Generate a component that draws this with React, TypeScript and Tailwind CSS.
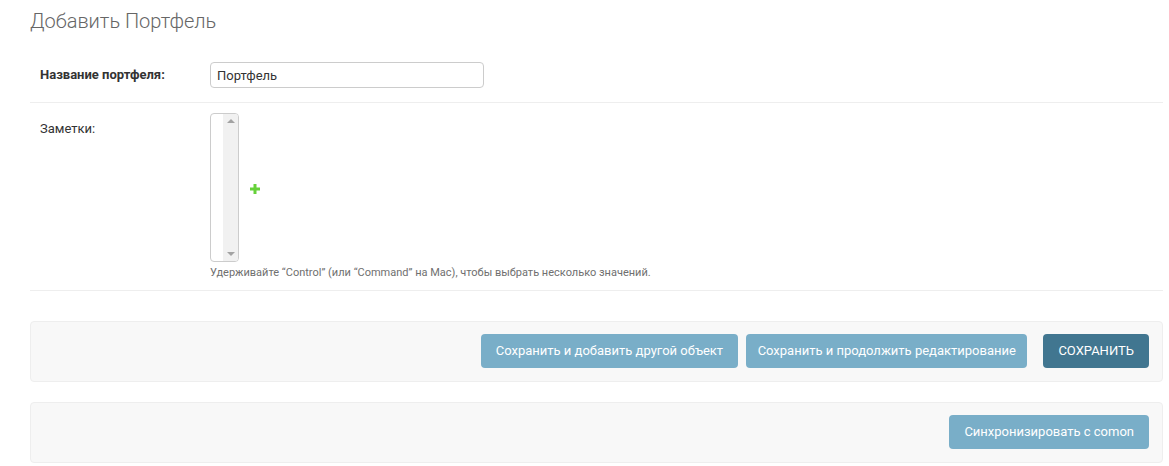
const font = { fontFamily: "Roboto, 'Liberation Sans', sans-serif" };

function AddIcon() {
  return (
    <svg width="10" height="10" viewBox="0 0 10 10" className="block">
      <path d="M3.5 0h3v3.5H10v3H6.5V10h-3V6.5H0v-3h3.5z" fill="#66d13a" />
    </svg>
  );
}

function EmptySelect() {
  return (
    <div className="flex h-[149px] w-[29px] overflow-hidden rounded-[4px] border border-[#cccccc] bg-white">
      <div className="flex-1" />
      <div className="flex w-[15px] flex-col items-center justify-between bg-[#f1f1f1] py-[5px]">
        <div className="h-0 w-0 border-x-[4px] border-b-[4px] border-x-transparent border-b-[#a3a3a3]" />
        <div className="h-0 w-0 border-x-[4px] border-t-[4px] border-x-transparent border-t-[#a3a3a3]" />
      </div>
    </div>
  );
}

function SubmitRow({ children }: { children: React.ReactNode }) {
  return (
    <div className="flex justify-end rounded-[4px] border border-[#eeeeee] bg-[#f8f8f8] pt-[12px] pr-[13px] pb-[13px]">
      {children}
    </div>
  );
}

export default function App() {
  return (
    <main className="min-h-screen bg-white pl-[30px] pr-[6px] text-[13px] text-[#333333]" style={font}>
      <h1 className="pt-[9px] text-[20px] font-light leading-[24px] text-[#666666]">Добавить Портфель</h1>

      <div className="mt-[19px]">
        <div className="flex items-center border-b border-[#eeeeee] pt-[10px] pb-[14px] pl-[10px]">
          <label className="w-[170px] font-bold text-[#333333]">Название портфеля:</label>
          <input
            defaultValue="Портфель"
            className="h-[26px] w-[274px] rounded-[4px] border border-[#cccccc] px-[6px] text-[13px] text-[#333333] outline-none"
          />
        </div>

        <div className="flex border-b border-[#eeeeee] pt-[10px] pb-[11px] pl-[10px]">
          <label className="w-[170px] pt-[8px] leading-[16px] text-[#333333]">Заметки:</label>
          <div>
            <div className="flex items-center">
              <EmptySelect />
              <div className="ml-[11px] mt-[2px]">
                <AddIcon />
              </div>
            </div>
            <p className="mt-[4px] text-[11px] leading-[13px] text-[#6f6f6f]">
              Удерживайте “Control” (или “Command” на Mac), чтобы выбрать несколько значений.
            </p>
          </div>
        </div>
      </div>

      <div className="mt-[30px]">
        <SubmitRow>
          <button className="h-[34px] rounded-[4px] bg-[#79aec8] px-[15px] text-[13px] text-white">
            Сохранить и добавить другой объект
          </button>
          <button className="ml-[8px] h-[34px] rounded-[4px] bg-[#79aec8] px-[11.5px] text-[13px] text-white">
            Сохранить и продолжить редактирование
          </button>
          <button className="ml-[16px] h-[34px] rounded-[4px] bg-[#417690] px-[15px] text-[13px] uppercase text-white">
            Сохранить
          </button>
        </SubmitRow>
      </div>

      <div className="mt-[20px]">
        <SubmitRow>
          <button className="h-[34px] rounded-[4px] bg-[#79aec8] px-[15px] text-[13px] text-white">
            Синхронизировать с comon
          </button>
        </SubmitRow>
      </div>
    </main>
  );
}
